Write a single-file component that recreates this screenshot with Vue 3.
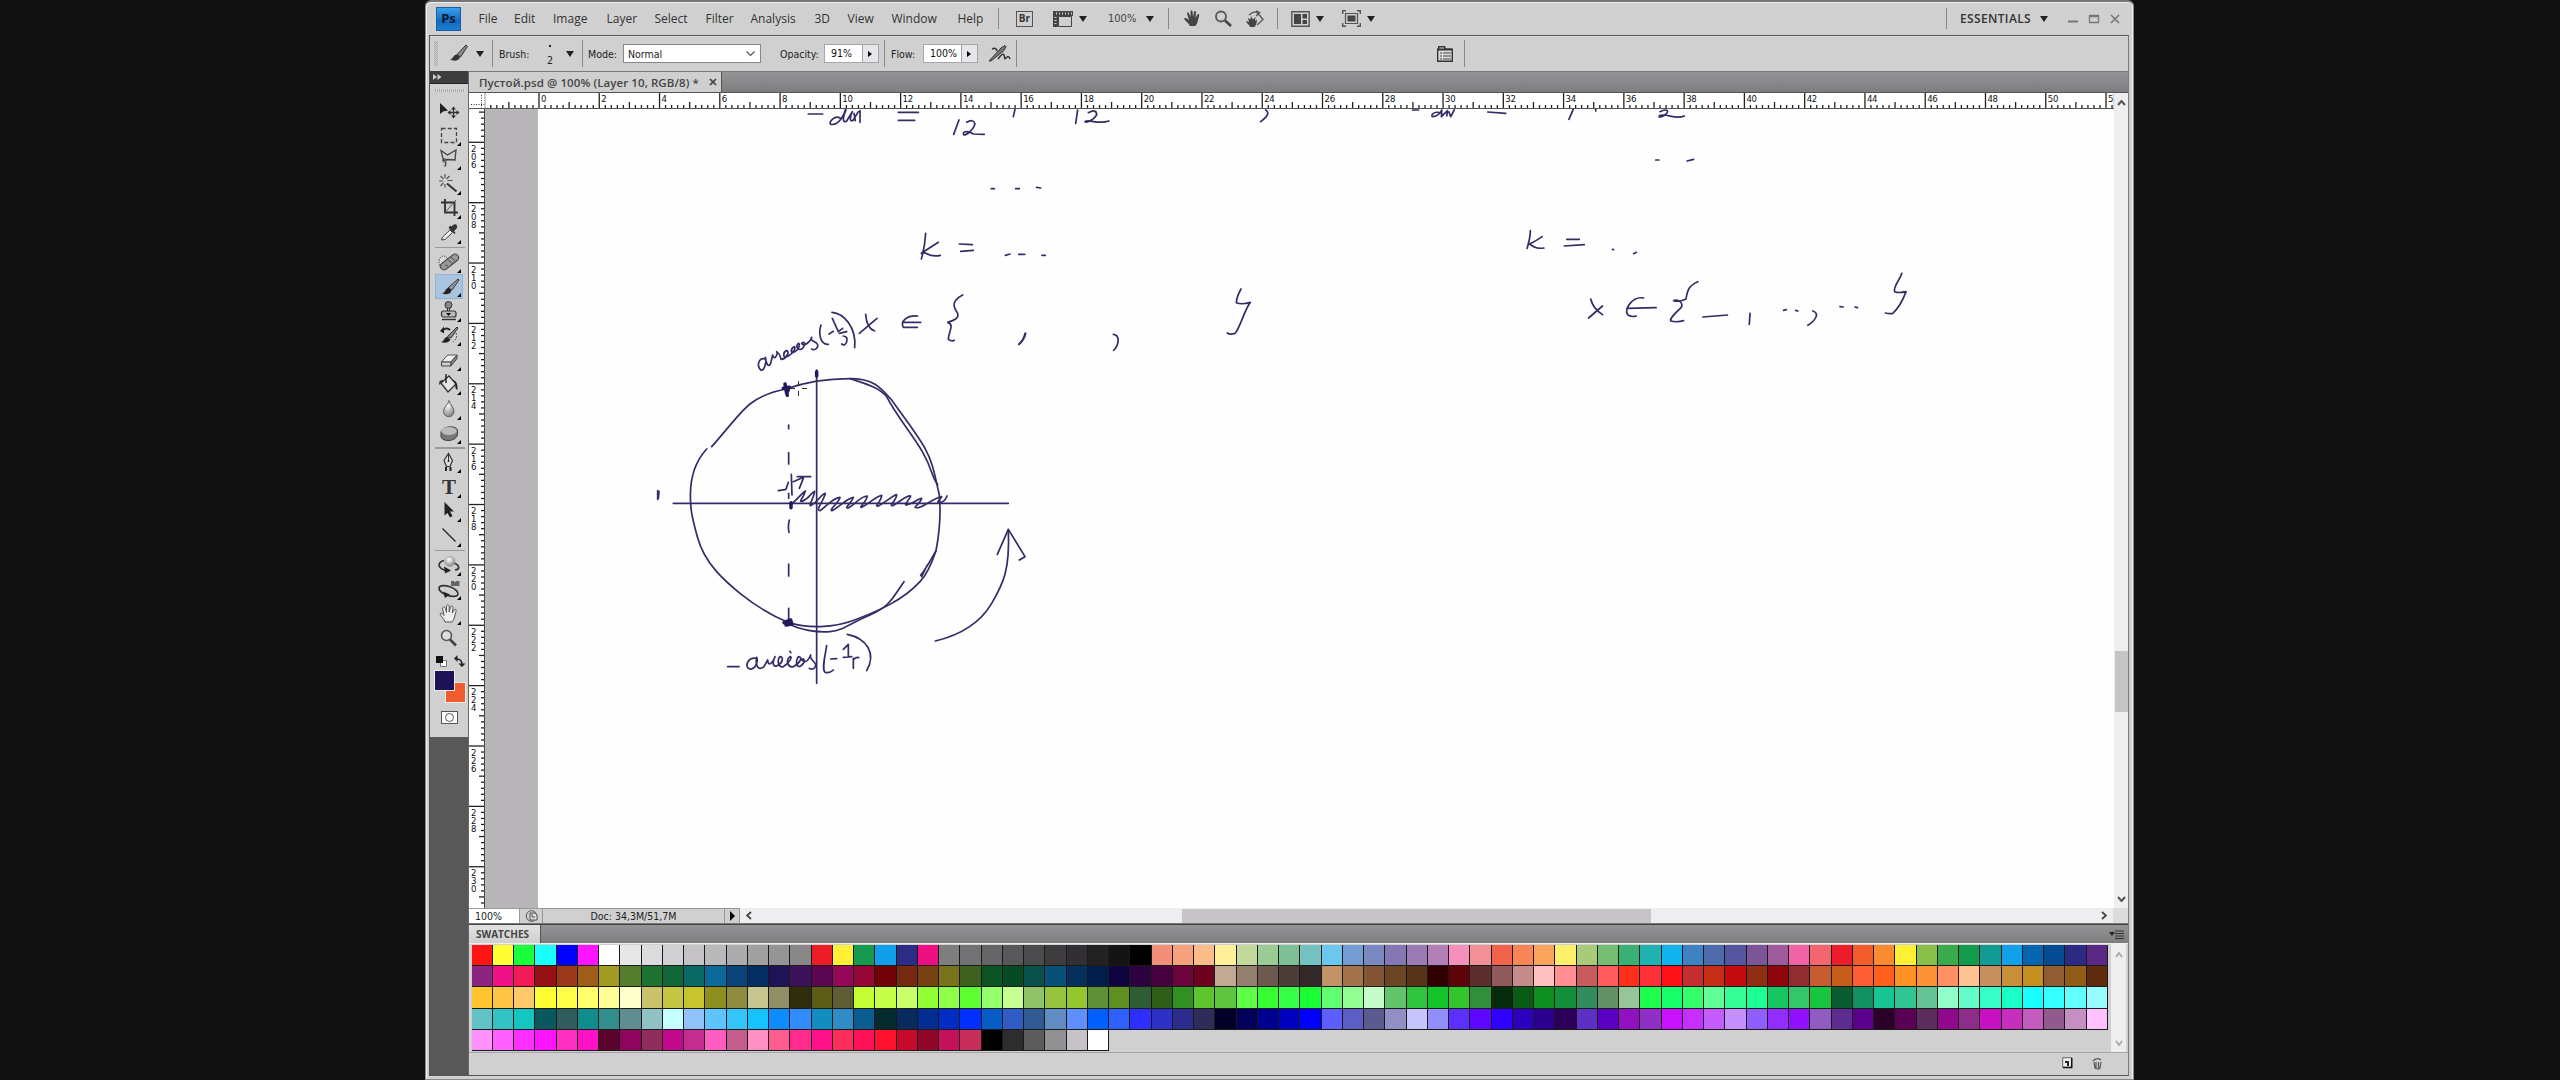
<script setup>
const menus = [
  ['File', 35.5], ['Edit', 39], ['Image', 53.5], ['Layer', 48], ['Select', 51], ['Filter', 45],
  ['Analysis', 64], ['3D', 33], ['View', 44], ['Window', 66], ['Help', 40],
]

const STEP = 6.027
const hTicks = []
for (let i = -8; i <= 261; i++) {
  // The last major mark only has room for its first digit.
  const label = String(i / 5)
  hTicks.push({ x: 70 + i * STEP, kind: i % 10 === 0 ? 'major' : i % 5 === 0 ? 'mid' : 'minor', label: i === 260 ? label[0] : label })
}
const hMajors = hTicks.filter((t) => t.kind === 'major')
const vTicks = []
for (let i = -5; i <= 126; i++) {
  vTicks.push({ y: 33.3 + i * 6.037, kind: i % 10 === 0 ? 'major' : i % 5 === 0 ? 'mid' : 'minor', label: String(206 + i / 5) })
}
const vMajors = vTicks.filter((t) => t.kind === 'major')

const swatchRows = [
  'ff1414 ffff33 1aff3c 1affff 0000ff ff14ff ffffff e8e7e8 dddbde d1d0d2 c5c3c6 b9b8ba adabae a0a0a0 949496 888686 ed1c29 fff035 159a50 109fe8 2c2b86 ee0f82 7e7e7e 727174 666466 585759 4b4a4c 3e3c3f 312f33 222222 141416 000000 f28f7a f7a27c fdbd88 fff099 c2d99b 9acb94 7fbf95 74c3c0 6bc7ee 749cd2 7a89bf 8378b4 9a7bb4 b27fb6 f58fbc f28f97 f2634c f88553 fca45b fff06b a7cb78 76bc73 3ab072 20b2b0 13b3f0 3f82c4 4b6bab 5555a0 7c5598 9e5b9b f062a4 f26571 ed1c2b f25d2b f88c2e fff033 89bf49 3aaa4b 119c4b 129b92 12a0ea 0565b0 044b91 2b2b82 5c2886',
  '8b2580 ee1188 f01b58 961116 9a3a1b 9f5d1a a39a22 557d2d 1f7331 0e6737 086a63 0a6a99 08437a 032e63 1f1258 3d1059 5b0651 950757 960636 700208 762b10 774211 79741c 3e611f 0a5323 074b25 07514a 06507a 06305c 021e4b 0f0340 2c0340 45023e 6c033a 6d0220 c1aa91 927f6e 6d594e 4c3d38 322829 c29367 a3734b 825535 6c4524 57331a 2e0000 5e0408 5d2c2d 905a5c c68c8c ffbfc3 ff8f91 c75c5c ff5c5c ff3019 ff3037 ff1217 c52e31 c62d16 c40c10 8f2d12 8f070c 8f2d30 c65b32 c65e1a ff5d36 ff5e1c ff9125 ff9237 ff9162 ffc392 c68f60 c68f38 c68f22 905c33 905c17 5e2c0c',
  'ffc42e ffc544 ffc86b ffff33 ffff49 ffff6b ffff98 ffffcb c8c36c c6c643 c6c530 8f8f20 8f8c3d c7c590 918f65 302d0c 5d5c17 5d5c32 c4ff33 c5ff4a c8ff6b 91ff33 91ff49 5eff33 95ff6b c7ff92 90c267 96c43d 94c62d 5d9037 5d901f 2e5d33 305d16 309020 5ec42c 5fc541 5eff47 36ff31 38ff48 1aff32 60ff72 92ff94 c6fcc9 62c56b 31c53f 14c529 32c52c 318f3b 052b0b 085c15 0e8f20 138e3b 338c60 639064 95c598 1fff4c 1aff6c 34ff6b 60ff98 36ff99 1dff95 17c562 34c66a 17c53f 085c30 119162 18c594 32c594 64c296 92ffca 62ffca 36ffc8 1cffc8 1affff 35ffff 62ffff 98fcff',
  '62c3c5 33c3c5 15c5c0 09585e 305c5c 118c8c 328e88 608e90 91c2c3 c5ffff 92c2fa 5ec5fc 33c5f8 14c3ff 0c8cff 308cff 128dbf 308cc5 0a5c90 052b2e 062b5c 032c90 002dc5 002fff 085cc5 305cc5 305a92 608cc2 5f8fff 0060ff 2e60ff 2e2fff 2e2fc5 2c2c8c 2f2c5a 020028 03005a 00008f 0000c0 0000ff 5d5eff 5d5ec5 5b5b90 918fc3 c7c4fc 928ffc 5b30ff 5d07ff 2d00ff 2d00c0 2c008e 2c005a 5c2fc5 5a00c2 9010c2 8f2fc5 c812ff c52fff c45cff c68fff 905eff 912eff 9010ff 905cc2 5c2c90 5a008d 2d0029 5a0055 5c2c5a 90088c 8e2c8a c610c2 c52fbc c45cc0 905a8f c68fc2 ffc2ff',
  'ff91fc ff60ff ff30ff ff14ff ff2fc2 ff12c5 5d022d 8f055d 8f2d5c c5088d c52c8f ff5dc2 c45c8c ff91c5 ff5c91 ff2c8c ff1188 ff2d5c ff1158 ff1230 c50a2c 8f0628 c5105a c72e5c 000000 2d2d2d 5c5c5c 919193 c5c3c6 ffffff',
].map((r) => r.split(' ').map((c) => '#' + c))

// Each tool glyph is drawn in a 28 x 24 box.
const tools = [
  { id: 'move', svg: '<path d="M5 5V16L8 13.5 13 12.500Z" fill="#222"/><path d="M18.500 9.500v10M13.500 14.500h10" stroke="#333" stroke-width="1.300"/><path d="M18.500 8.500l-2.500 3h5zM18.500 20.500l-2.500-3h5zM12.500 14.500l3-2.500v5zM24.500 14.500l-3-2.500v5z" fill="#333"/>' },
  { id: 'marquee', more: 1, svg: '<rect x="6.500" y="5.500" width="15" height="14" stroke="#444" stroke-width="1.300" stroke-dasharray="4 2.200"/>' },
  { id: 'lasso', more: 1, svg: '<path d="M6 3.500l6.500 4.500 8.500-5-1 10-7.500-.5-4 1z" stroke="#444" stroke-width="1.300"/><circle cx="9.500" cy="13.500" r="1.800" stroke="#444"/><path d="M10 15q2 1.500-.5 4.500" stroke="#444" stroke-width="1.300"/>' },
  { id: 'wand', more: 1, svg: '<path d="M12 11.500l9.500 8" stroke="#333" stroke-width="2"/><path d="M10 2v4M10 12v3.500M4 9h4M12.500 8.500h5M5.500 4l3 3M14.500 4l-3 3M5.500 14l3-3" stroke="#555" stroke-width="1.200"/>' },
  { id: 'crop', more: 1, svg: '<path d="M10 3v13.500h13M6 6.500h13.500V20" stroke="#333" stroke-width="1.900"/><path d="M10 16.500L21 4" stroke="#555" stroke-width="1"/>' },
  { id: 'eyedropper', more: 1, svg: '<path d="M6.500 19l1-3 7.500-7 2.500 2.500-7.500 7z" fill="#eee" stroke="#444" stroke-width="1"/><path d="M13.500 7l6 6 1-1-1.500-2q4-3 3-5.500-2-3-5.500 1l-1.500-1z" fill="#333"/>', sep: 1 },
  { id: 'heal', more: 1, svg: '<ellipse cx="8.500" cy="12" rx="4.500" ry="6" fill="#ddd" stroke="#222" stroke-dasharray="1.200 1.300"/><rect x="4" y="8.500" width="21" height="7" rx="3.500" transform="rotate(-38 14.500 12)" fill="#999" stroke="#444" stroke-width="1.100"/><path d="M10 15l3 1M12 9l6 5M16 7l4 4" stroke="#555"/>' },
  { id: 'brush', more: 1, active: 1, svg: '<path d="M13 14L23 5l1 1-7 10z" fill="#999" stroke="#333" stroke-width="1"/><path d="M7 19.500c4-1 3-5.500 6.500-5.500l3 2.500c-1 4-6 4.500-9.500 3z" fill="#222"/>' },
  { id: 'stamp', more: 1, svg: '<circle cx="13.500" cy="6" r="3.500" fill="#888" stroke="#333"/><path d="M12.500 9v4h2V9" stroke="#333"/><rect x="6.500" y="12" width="14.500" height="6" rx="2" fill="#bbb" stroke="#333" stroke-width="1.200"/><path d="M7 20.500h14" stroke="#333" stroke-width="1.400"/><path d="M11 14h5l-2.500 3z" fill="#111"/>' },
  { id: 'history', more: 1, svg: '<path d="M12.500 13.500L22 4l1 1-7 10z" fill="#888" stroke="#333"/><path d="M6 19c4-1 3-5.500 6.500-5l3 2.500C14 20 9 20.500 6 19z" fill="#222"/><path d="M8 7q4-3 7 0" stroke="#222" stroke-width="2"/><path d="M9 3.500v7L5 8z" fill="#222"/><path d="M21 10q2 5-3 9" stroke="#333" stroke-dasharray="1.500 1.500"/>' },
  { id: 'eraser', more: 1, svg: '<path d="M6.500 14l6-7h9.500l-6 7z" fill="#eee" stroke="#555"/><path d="M6.500 14H16v4H6.500z" fill="#ccc" stroke="#444"/><path d="M16 14l6-7v3.500L16 18z" fill="#888" stroke="#444"/>' },
  { id: 'bucket', more: 1, svg: '<path d="M6 11l8-7 7 8-8 8z" fill="#e6e6e6" stroke="#333" stroke-width="1.300"/><path d="M5 12.500q-1-4 3-3.500M11 2v9" stroke="#222" stroke-width="1.400"/><path d="M18 8q5 1 4.500 10-3-1-2-6z" fill="#222"/>' },
  { id: 'blur', more: 1, svg: '<path d="M14 3.500c1 5 5 6 5 11a5.200 5.200 0 0 1-10.500 0c0-5 4.500-6 5.500-11z" fill="url(#ball)" stroke="#666"/>' },
  { id: 'sponge', more: 1, svg: '<path d="M6 11c1-6 15-7 16.500-2v5c-2 7-15 7-16.500 2z" fill="#777" stroke="#444"/><ellipse cx="14" cy="10" rx="7.800" ry="4" fill="#bbb"/>', sep: 1 },
  { id: 'pen', more: 1, svg: '<path d="M13.500 3.500l4 7-2.500 6h-3.500l-2.500-6z" fill="#ddd" stroke="#333" stroke-width="1.200"/><path d="M13.500 4v7" stroke="#333"/><path d="M11 17v4M15.500 17v4" stroke="#222" stroke-width="2"/><circle cx="13.500" cy="11" r="1" fill="#222"/>' },
  { id: 'type', more: 1, svg: '<text x="14" y="18.500" text-anchor="middle" font-family="Liberation Serif, serif" font-size="21" font-weight="bold" fill="#333">T</text>' },
  { id: 'select', more: 1, svg: '<path d="M9.500 3v13.500l3-2.500 2.500 4.500 2.500-1.500-2.500-4.500h4z" fill="#222"/>' },
  { id: 'line', more: 1, svg: '<path d="M7.500 4.500L20.500 17.500" stroke="#333" stroke-width="1.500"/>', sep: 1 },
  { id: 'rotate3d', more: 1, svg: '<path d="M9 7.500C1 9.500 3 17 13 17.500M19 10c6 2.500 6 6.500 1 7" stroke="#333" stroke-width="1.700"/><path d="M9 13.500l7 4-6 3z" fill="#222"/><circle cx="15" cy="8.500" r="5" fill="url(#ball)" stroke="#999" stroke-width=".6"/>' },
  { id: 'orbit3d', more: 1, svg: '<ellipse cx="13.500" cy="14" rx="10" ry="4.500" transform="rotate(20 13.500 14)" stroke="#333" stroke-width="1.700"/><path d="M8 14.500l7 3-5 3.500z" fill="#222"/><path d="M16 4h3l1 1.500 1-1.500h3.500v5H16z" fill="#666"/>' },
  { id: 'hand', more: 1, svg: '<path d="M10 20c-1-4-4-5-5-8 1-2 3 0 4 1.500L7.500 6c1-2 2.500-1 3 .5l1 4V4c1-2 2.500-1 2.700.5V10l1.300-5c1-2 2.500-1 2.500 1l-.7 5 1.700-3c1-1.500 2.500-.5 2 1.500-1 3-1.500 8-4 10.500z" fill="#eee" stroke="#555"/>' },
  { id: 'zoom', svg: '<circle cx="11.500" cy="9.500" r="5" fill="#ddd" stroke="#555" stroke-width="1.500"/><path d="M15 13.500l6 6" stroke="#444" stroke-width="2.600"/>' },
]

// Brush strokes of the document, grouped by the tile they were laid down in.
const strokes = [
  {
    id: 'circle', t: 'translate(640 280) scale(.33333)',
    thin: [
      'M100 670H1105', 'M530 270V1210',
      'M215 500C260 450 300 395 330 372S400 334 438 327',
      'M438 327C500 305 560 296 630 296S720 320 755 360C790 410 830 460 855 505S885 590 898 645C903 700 900 750 888 812C875 850 860 885 840 905C790 960 720 990 650 1018S500 1045 447 1028C390 1005 340 972 300 940C260 908 245 892 230 875C195 835 180 800 172 770C155 710 152 690 152 670C147 600 165 545 200 507',
      'M630 296C690 315 720 325 740 350C770 410 820 465 850 520S870 580 893 615',
      'M442 1030C480 1050 530 1058 570 1055S630 1030 690 1005S760 950 792 905',
      'M888 812C870 845 855 870 842 886M862 855L845 890',
      'M886 1083C960 1065 1020 1030 1055 970S1110 870 1105 750', 'M1105 748L1072 823M1105 748L1155 830L1138 840',
      'M446 435V446M446 518V552M446 640V655M448 720Q443 740 447 757M446 852V888M446 985V1028',
      'M53 632V658M57 634L55 655', 'M415 632L435 629M445 607L438 628M454 583L456 645M460 605L490 592M472 590L512 590M490 595L478 625',
      'M455 672C480 650 490 635 496 633C490 655 475 665 486 664C510 655 515 635 524 634C520 660 505 675 512 677C535 665 545 640 556 640C550 665 525 690 540 692C560 680 575 655 600 652C600 665 565 690 576 692C600 680 620 655 640 652C635 670 610 685 625 684C650 670 660 650 682 648C680 665 655 683 665 682C690 670 705 650 725 646C725 665 700 680 715 678C740 665 755 648 770 644C770 660 745 678 758 677C780 665 800 645 812 648C805 665 790 675 800 675C820 670 835 655 845 655C840 675 810 685 835 683C860 675 880 655 905 650C900 660 885 668 900 668Q915 665 921 648',
      'M375 237C355 230 350 260 362 270C375 275 380 240 376 232C378 250 385 265 392 250L398 225C402 245 415 222 410 215C425 225 420 240 425 238C440 235 450 215 440 212C430 215 425 238 445 228C460 220 470 200 462 200C452 205 450 225 465 215C480 205 480 190 475 190C465 200 475 215 488 205C500 190 490 182 485 190C490 205 515 180 515 172C505 185 545 185 530 205Q520 212 515 207',
      'M543 135C535 160 540 195 565 193M567 162L580 154M577 115L595 155L608 145M598 160L620 155M610 168Q625 170 620 185T605 192M576 97C610 100 650 140 644 203',
      'M677 103Q680 145 704 153M711 115L658 160', 'M833 108C800 105 780 125 790 142H832M790 127H842',
      'M968 45C940 60 935 75 952 98C960 115 940 122 923 127C945 135 925 155 925 178Q935 185 943 181', 'M1155 160Q1152 178 1136 193',
      'M263 1160H297', 'M350 1135C325 1130 315 1155 325 1165C345 1175 355 1145 350 1132C345 1155 355 1175 372 1160L383 1140C385 1165 400 1145 405 1130C395 1150 400 1165 415 1155C430 1145 430 1130 420 1130C410 1140 415 1165 430 1160C445 1150 460 1130 450 1130C435 1140 445 1165 460 1160C480 1150 490 1130 475 1130C465 1145 470 1165 482 1158C500 1145 490 1130 485 1140C500 1155 510 1130 512 1125C505 1140 540 1150 522 1165Q515 1170 508 1165M450 1114L452 1118',
      'M560 1097C555 1130 545 1165 555 1177Q570 1180 580 1170M572 1137L590 1136M610 1108L625 1093V1130M610 1132L635 1130M640 1135V1165M640 1140Q648 1130 656 1133M622 1063C680 1075 710 1120 680 1172',
    ],
    thick: ['M430 325L448 322L440 340L435 312L442 346', 'M432 1028L452 1020L455 1032L438 1035', 'M453 668V683M530 275V288'],
  },
  {
    id: 'left', t: 'translate(780 90) scale(.33333)',
    thin: [
      'M85 72H128', 'M180 84C165 75 145 95 152 103C175 108 195 75 198 50M198 60C185 90 190 100 200 93L217 65C208 85 210 98 220 90L235 65M222 70L226 92M240 62V97', 'M355 67H415M355 91H404',
      'M537 90L521 133', 'M560 97Q580 85 585 102C580 120 560 135 552 135C545 125 560 120 580 132T613 133', 'M705 58L700 80', 'M893 60L887 100',
      'M925 68Q950 55 950 75C940 90 920 100 915 95C925 85 950 105 987 93', 'M1457 60Q1475 70 1442 95',
      'M634 296H643M707 296H718M770 292L782 294', 'M437 430Q435 470 424 507M475 457L424 490C440 480 440 505 481 496', 'M538 462L577 464M542 484L580 481', 'M676 496L690 492M716 493H734M786 496H796',
      'M737 730Q733 750 717 763M1000 733C1020 735 1018 765 1001 781', 'M1383 597Q1370 620 1369 638Q1385 645 1411 637C1395 655 1380 715 1365 730Q1350 735 1342 729',
    ],
    thick: [],
  },
  {
    id: 'right', t: 'translate(1400 90) scale(.35714 .33333)',
    thin: [
      'M35 60H52', 'M108 67C92 65 85 78 92 80C108 78 115 65 117 60M117 62L116 80L133 62L131 78M137 66L142 80L152 60', 'M246 66L296 70', 'M485 58L473 88M548 58V63', 'M728 65C745 55 755 62 745 72C730 85 720 82 728 76C750 70 770 90 796 78',
      'M716 210H725M804 213L822 208', 'M365 422C365 445 358 465 356 475M398 440Q370 460 362 462C375 470 380 477 403 474', 'M467 448H502M460 468L516 464', 'M595 478L598 479M654 491L662 487',
      'M534 627Q540 655 567 674M567 648L528 684', 'M682 624C650 618 625 660 638 675Q650 682 661 678M635 655L717 653',
      'M834 575C800 590 805 615 800 628Q780 637 766 632C785 625 795 645 785 655C770 670 755 685 758 693Q775 698 794 692', 'M848 681L917 675M980 670L978 703M1074 661L1082 659M1108 661L1114 663M1156 663C1175 670 1165 690 1142 706M1232 650L1241 651M1274 651L1281 653',
      'M1405 550C1400 570 1380 590 1385 605Q1395 610 1417 605C1410 625 1395 655 1380 670Q1370 672 1359 669',
    ],
    thick: [],
  },
]
</script>

<template>
  <div class="desktop">
    <svg class="defs" width="0" height="0">
      <defs>
        <radialGradient id="ball" cx=".4" cy=".3" r=".8"><stop offset="0" stop-color="#fff" /><stop offset="1" stop-color="#777" /></radialGradient>
      </defs>
    </svg>
    <div class="window">
      <header class="titlebar">
        <div class="logo">Ps</div>
        <nav class="menu"><span v-for="m in menus" :key="m[0]" :style="{ width: m[1] + 'px' }">{{ m[0] }}</span></nav>
        <div class="appbar">
          <i class="rule"></i>
          <b class="bridge">Br</b>
          <svg width="20" height="16" fill="none"><path d="M0 0h20v5H5v11H0z" fill="#444" /><path d="M3 2.500h16" stroke="#ccc" stroke-width="2" stroke-dasharray="1 2" /><path d="M2.500 6v9" stroke="#ccc" stroke-width="2" stroke-dasharray="1 2" /><path d="M5.500 5.500h13v10h-13z" stroke="#444" /></svg>
          <i class="tri"></i>
          <span class="zoomval">100%</span>
          <i class="tri"></i>
          <i class="rule"></i>
          <svg width="17" height="17"><path d="M6 16C4 12 1 11 0 8.500 2 7 3.500 9 5 10L3 3.500c0-1.500 1.700-1.500 2 0L6.500 7V1.500C6.500 0 8.300 0 8.500 1.500L9 7l1-5c.5-1.500 2-1 2 .5L11.500 8l2-3.500c1-1 2.200 0 1.500 1.500-1 3-1 7-3.500 10z" fill="#444" /></svg>
          <svg width="17" height="17" fill="none"><circle cx="6" cy="6.500" r="5" stroke="#555" stroke-width="1.800" /><path d="M10 10.500l6 5.500" stroke="#444" stroke-width="2.600" /></svg>
          <svg width="18" height="18" fill="none"><path d="M4 17C3 14 0 13 0 11l3 1-1-4 2.500 1.500L5 6l2 3.500L9.500 7 9 11l2-1.500c0 3-1 6-2.500 7.500z" fill="#444" /><path d="M10 6l2.500-2L17 9.500 11 15M3 5q4-4 9-3" stroke="#555" stroke-width="1.300" /><path d="M10 0l5 2.500-4 2.500z" fill="#555" /></svg>
          <i class="rule"></i>
          <svg width="19" height="16" fill="none"><path d="M.8.800h17.400v14.400H.8z" stroke="#555" stroke-width="1.400" /><path d="M3 3h7v10H3zM11.500 3H16v4.500h-4.500zM11.500 9H16v4h-4.500z" fill="#444" /></svg>
          <i class="tri"></i>
          <svg width="19" height="17" fill="none"><path d="M.7 4V.7H4M15 .700h3.300V4M.7 13v3.300H4M15 16.300h3.300V13" stroke="#555" stroke-width="1.400" /><path d="M3.500 3.500h12v10h-12z" stroke="#555" stroke-width="1.200" /><path d="M5.500 5.500h8v6h-8z" fill="#444" /></svg>
          <i class="tri"></i>
        </div>
        <div class="workspace-switch">
          <i class="rule"></i><span>ESSENTIALS</span><i class="tri"></i>
          <svg width="54" height="12" fill="none" stroke="#777"><path d="M0 8.500h10" stroke-width="2" /><path d="M21.500 2.500h9v7h-9zM21.500 3.500h9" stroke-width="1.300" /><path d="M43 2l8 8M51 2l-8 8" stroke-width="1.700" /></svg>
        </div>
      </header>

      <div class="frame">
        <div class="options">
          <i class="grip"></i>
          <svg width="18" height="17"><path d="M7 9.500L16 0l1.500 1.500L10.500 12z" fill="#888" stroke="#333" stroke-width="1" /><path d="M0 14.500c4-1 3-5 7-5l3 2.500c-1 4-6 4.500-10 2.500z" fill="#333" /></svg>
          <i class="tri"></i>
          <i class="rule"></i>
          <span>Brush:</span>
          <span class="tip"><em></em>2</span>
          <i class="tri"></i>
          <i class="rule"></i>
          <span>Mode:</span>
          <span class="select">Normal<svg width="9" height="6" fill="none"><path d="M.5.500l4 4 4-4" stroke="#555" stroke-width="1.200" /></svg></span>
          <span>Opacity:</span>
          <span class="field"><b>91%</b><u><i></i></u></span>
          <i class="rule"></i>
          <span>Flow:</span>
          <span class="field"><b>100%</b><u><i></i></u></span>
          <svg width="23" height="18" fill="none"><path d="M1 16L13 3l4-2.500 1 1-2 4L3 16z" fill="#777" stroke="#333" /><path d="M4 4q4-2 5 2M10 14c3-4 5-6 6-4s0 5 2 3 3-2 4 1" stroke="#333" stroke-width="1.500" /></svg>
          <i class="rule"></i>
          <svg width="16" height="16" fill="none"><path d="M.7 15.300V3.200h1V.7h6v2.500h7.600v12.100z" fill="#ddd" stroke="#333" stroke-width="1.400" /><path d="M1 3.500h14" stroke="#333" stroke-width="2" /><path d="M3 7h2M6 7h8M3 10h2M6 10h8M3 13h2M6 13h8" stroke="#444" stroke-width="1.200" /></svg>
          <i class="rule"></i>
        </div>

        <div class="main">
          <aside class="side">
            <div class="collapse"><svg width="9" height="6"><path d="M0 0l4 3-4 3zM4.500 0l4 3-4 3z" fill="#ccc" /></svg></div>
            <div class="toolbox">
              <i class="hgrip"></i>
              <template v-for="t in tools" :key="t.id">
                <div class="tool" :class="{ active: t.active }">
                  <svg width="28" height="24" fill="none"><g v-html="t.svg"></g><path v-if="t.more" d="M26 19v4h-4z" fill="#000" /></svg>
                </div>
                <hr v-if="t.sep" />
              </template>
              <svg class="mini" width="32" height="14" fill="none"><path d="M5.500 5.500h6v6h-6z" fill="#fff" stroke="#777" /><path d="M1 1h7v7H1z" fill="#111" /><path d="M22 4q5 0 5 6" stroke="#222" stroke-width="1.500" /><path d="M22.500 0v7L19 3.500zM23.500 8.500h7L27 12z" fill="#222" /></svg>
              <div class="colors"><i class="back"></i><i class="fore"></i></div>
              <div class="mask"><i></i></div>
            </div>
          </aside>

          <section class="doc">
            <div class="tabs"><div class="tab">Пустой.psd @ 100% (Layer 10, RGB/8) *<svg width="8" height="8"><path d="M1 1l6 6M7 1L1 7" stroke="#444" stroke-width="1.700" /></svg></div></div>
            <div class="editor">
              <div class="sheet">
                <svg class="hruler" width="1645" height="16">
                  <rect width="1644" height="15" fill="#fff" />
                  <path d="M12.500 2v14M2 11.500h14" stroke="#333" stroke-dasharray="1 1.500" />
                  <path d="M16 0v16" stroke="#999" />
                  <path v-for="t in hTicks" :key="t.x" :d="`M${t.x} ${t.kind === 'major' ? 0 : t.kind === 'mid' ? 9 : 12}V15.500`" stroke="#222" stroke-width="1.300" />
                  <text v-for="t in hMajors" :key="t.label + t.x" :x="t.x + 2" y="9">{{ t.label }}</text>
                  <path d="M0 15.500h1645" stroke="#555" />
                </svg>
                <div class="page">
                  <svg class="vruler" width="16" height="799">
                    <rect width="16" height="799" fill="#fff" />
                    <g v-for="t in vTicks" :key="t.y">
                      <path :d="`M${t.kind === 'major' ? 0 : t.kind === 'mid' ? 10 : 12} ${t.y}H16`" stroke="#222" stroke-width="1.300" />
                    </g>
                    <g v-for="t in vMajors" :key="t.label">
                      <text v-for="(d, n) in t.label" :key="n" x="4.500" text-anchor="middle" :y="t.y + 9.500 + n * 8">{{ d }}</text>
                    </g>
                    <path d="M15.500 0v799" stroke="#444" />
                  </svg>
                  <svg class="canvas" width="1629" height="799" viewBox="485 109 1629 799" fill="none">
                    <rect x="485" y="109" width="1629" height="799" fill="#fefefe" />
                    <rect x="485" y="109" width="53" height="799" fill="#b8b6b9" />
                    <g v-for="g in strokes" :key="g.id" :transform="g.t" stroke="#352c66" stroke-linecap="round" stroke-linejoin="round">
                      <path v-for="d in g.thin" :key="d" :d="d" stroke-width="1.700" vector-effect="non-scaling-stroke" />
                      <path v-for="d in g.thick" :key="d" :d="d" stroke-width="3.500" stroke="#211a5c" vector-effect="non-scaling-stroke" />
                    </g>
                    <path d="M798.500 381v5M798.500 391v5M790 388.500h5M802 388.500h5" stroke="#333" />
                  </svg>
                </div>
              </div>
              <div class="vscroll">
                <svg width="9" height="6" fill="none"><path d="M1 5l3.500-4L8 5" stroke="#555" stroke-width="2" /></svg>
                <i></i>
                <svg width="9" height="6" fill="none"><path d="M1 1l3.500 4L8 1" stroke="#555" stroke-width="2" /></svg>
              </div>
            </div>
            <div class="status">
              <span class="pct">100%</span>
              <span class="clock"><svg width="14" height="14" fill="none"><circle cx="6.500" cy="7" r="5.300" stroke="#555" /><path d="M5 4h5l2 2v5H5z" fill="#ddd" stroke="#555" /><path d="M7 5v3h3" stroke="#555" /></svg></span>
              <span class="size">Doc: 34,3M/51,7M</span>
              <span class="go"><i></i></span>
              <div class="hscroll">
                <svg width="6" height="9" fill="none"><path d="M5 1L1 4.500 5 8" stroke="#444" stroke-width="1.800" /></svg>
                <i></i>
                <svg width="6" height="9" fill="none"><path d="M1 1l4 3.500L1 8" stroke="#444" stroke-width="1.800" /></svg>
              </div>
              <em class="corner"></em>
            </div>

            <div class="panel">
              <div class="panel-head"><div class="panel-tab">SWATCHES</div><svg width="15" height="9"><path d="M0 2h6L3 6z" fill="#222" /><path d="M6 1h9M6 3.500h9M6 6h9M6 8.500h9" stroke="#333" /></svg></div>
              <div class="panel-body">
                <div class="grid">
                  <div v-for="(r, i) in swatchRows" :key="i" class="row"><i v-for="(c, j) in r" :key="j" :style="{ background: c }"></i></div>
                </div>
                <div class="pscroll">
                  <svg width="8" height="7" fill="none"><path d="M1 6l3-4 3 4" stroke="#aaa" stroke-width="1.800" /></svg>
                  <svg width="8" height="7" fill="none"><path d="M1 1l3 4 3-4" stroke="#aaa" stroke-width="1.800" /></svg>
                </div>
              </div>
              <div class="panel-foot">
                <svg width="11" height="12" fill="none"><path d="M.7.700h9v9.600h-9z" fill="#eee" stroke="#666" /><path d="M9.700 1v9.500H1" stroke="#111" stroke-width="1.500" /><path d="M3 4h4v5H5V6H3z" fill="#222" /></svg>
                <svg width="11" height="13" fill="none"><path d="M1 4q4-4 8-1M2 5l1 6q3 2 5 0l1-6M4 5v6M6.500 5v6" stroke="#555" stroke-width="1.200" /></svg>
              </div>
            </div>
          </section>
        </div>
      </div>
    </div>
  </div>
</template>

<style>
body { margin: 0; background: #111; }
</style>

<style scoped>
* { box-sizing: border-box; }
.desktop { width: 2560px; height: 1080px; background: #111; overflow: hidden; display: flex; font-family: "DejaVu Sans Condensed", "DejaVu Sans", sans-serif; font-size: 10.5px; color: #222; }
.defs { position: absolute; }
svg { display: block; flex: none; }
i, em, u { font-style: normal; text-decoration: none; display: block; }
.window { margin-left: 425px; width: 1709px; height: 1080px; background: #d0d0d0; border: 1px solid #8a8a8c; border-top: 2px solid #77747a; border-radius: 6px 6px 0 0; display: flex; flex-direction: column; box-shadow: inset 1px 1px 0 #eee, inset -1px 0 0 #eee; }
.titlebar { height: 33px; flex: none; display: flex; align-items: center; padding-left: 10px; font-family: "Open Sans", "Noto Sans", sans-serif; font-size: 12px; color: #333; position: relative; }
.logo { width: 25px; height: 24px; margin-right: 17.5px; background: linear-gradient(#39a0f0, #1268bd 60%, #1d7fd6); border: 1px solid #1a5c9e; color: #0a1b33; font-weight: 700; font-size: 13px; line-height: 20px; text-align: center; }
.menu { display: flex; width: 519.5px; }
.menu span { white-space: nowrap; }
.rule { width: 1px; height: 21px; background: #888; }
.tri { width: 0; height: 0; border: 4px solid transparent; border-top: 6px solid #222; border-bottom: 0; }
.appbar { display: grid; grid-template-columns: 18px 37px 26px 29px 38px 22px 16px 31px 31px 31px 14px 25px 26px 25px 8px; align-items: center; }
.bridge { width: 17px; height: 16px; border: 1.5px solid #555; font-size: 10px; line-height: 12px; text-align: center; color: #333; }
.zoomval { font-family: "DejaVu Sans Condensed", sans-serif; font-size: 11px; color: #444; }
.workspace-switch { margin-left: auto; width: 187px; display: grid; grid-template-columns: 14px 80px 28px 54px; align-items: center; font-weight: 600; font-size: 12px; letter-spacing: .35px; }
.frame { margin: 0 4px 0 3px; height: 1041px; border: 1px solid #555; border-right-color: #777; display: flex; flex-direction: column; }
.options { height: 35px; flex: none; display: grid; grid-template-columns: 16px 26px 16px 7px 49px 18px 16px 6px 35px 157px 44px 60px 7px 32px 65px 28px 421px 27px 2px; align-items: center; padding-left: 4px; box-shadow: inset 0 1px 0 #ddd; }
.options .rule { height: 27px; }
.options > span { white-space: nowrap; }
.grip { width: 4px; height: 25px; background: repeating-conic-gradient(#aaa 0 25%, #d0d0d0 0 50%) 0 0 / 2px 2px; }
.tip { display: flex; flex-direction: column; align-items: center; width: 8px; margin-left: -2px; padding-top: 4px; }
.tip em { width: 1.500px; height: 1.500px; background: #222; margin-bottom: 7px; }
.select { width: 138px; height: 19px; background: #fff; border: 1px solid #888; padding: 0 5px 0 4px; display: flex; align-items: center; justify-content: space-between; }
.field { display: flex; width: 55px; height: 19px; background: #fff; border: 1.500px solid #a5a5ad; }
.field b { width: 37px; font-weight: 400; line-height: 17px; padding-left: 6px; color: #111; }
.field u { flex: 1; background: #e6e5e8; border-left: 1px solid #a5a5ad; display: flex; align-items: center; padding-left: 5px; }
.field u i, .go i { border: 3px solid transparent; border-left: 4.500px solid #000; border-right: 0; }
.main { display: flex; flex: 1; min-height: 0; }
.side { width: 39px; background: #585858; border-right: 1px solid #666; }
.collapse { height: 13px; background: #3d3d3d; border-bottom: 1px solid #222; padding: 3px 0 0 3px; }
.toolbox { height: 653px; background: #d0d0d0; display: flex; flex-direction: column; padding: 5px 0 0 5px; }
.hgrip { width: 30px; height: 3px; margin-bottom: 6px; flex: none; background: repeating-linear-gradient(90deg, #aaa 0 1px, #d8d8d8 1px 2px); }
.tool { height: 24.500px; width: 28px; flex: none; }
.tool.active { background: #a9c4df; box-shadow: inset 0 0 0 1px #8fb3d6; }
hr { width: 30px; height: 1.500px; margin: 1.500px 0; border: 0; background: #999; flex: none; }
.mini { margin: 4px 0 0 0; }
.colors { height: 33px; width: 32px; position: relative; margin: 1px 0 0 -1px; flex: none; }
.colors i { position: absolute; width: 21px; height: 21px; border: 1px solid #eee; }
.back { right: 0; bottom: 0; background: #f05c2c; }
.fore { left: 0; top: 0; background: #1c1258; }
.mask { width: 17px; height: 13px; margin: 8px 0 0 6px; border: 1px solid #555; background: #fff; display: flex; align-items: center; justify-content: center; }
.mask i { width: 9px; height: 9px; border: 1.300px solid #555; border-radius: 50%; }
.doc { flex: 1; min-width: 0; display: flex; flex-direction: column; }
.tabs { height: 22px; flex: none; background: linear-gradient(#949496, #7e7c7f); border-top: 1px solid #777; border-bottom: 1px solid #555; display: flex; }
.tab { width: 253px; background: #cfcfcf; border-right: 1px solid #555; display: flex; align-items: center; padding-left: 10px; font-family: "Open Sans", "Noto Sans", sans-serif; font-weight: 600; font-size: 11.500px; color: #444; white-space: nowrap; letter-spacing: .08px; }
.tab svg { margin-left: 10px; }
.editor { display: flex; height: 815px; flex: none; }
.sheet { width: 1645px; }
.hruler text, .vruler text { font-family: "DejaVu Sans Condensed", sans-serif; font-size: 9.500px; fill: #111; letter-spacing: -.3px; }
.page { display: flex; }
.vscroll { width: 14px; background: #eeedef; display: flex; flex-direction: column; align-items: center; padding: 7px 0 6px; }
.vscroll i { width: 13px; height: 61px; background: #c6c4c6; margin: 545px 0 auto; }
.status { display: flex; height: 16px; flex: none; background: #d0d0d0; line-height: 16px; border-bottom: 1px solid #777; }
.status > span { border: 1px solid #999; border-width: 1px 1px 0 0; line-height: 15px; }
.pct { width: 51px; background: #fff; padding-left: 6px; }
.clock { width: 23px; padding-left: 5px; }
.size { width: 182px; text-align: center; }
.go { width: 15px; display: flex; align-items: center; padding-left: 5px; }
.status .go i { border-width: 5px 0 5px 5px; }
.hscroll { flex: 1; background: #eeedef; display: flex; align-items: center; padding: 0 6px 0 6px; }
.hscroll i { width: 469px; height: 14px; background: #c6c4c6; margin: 0 auto 0 430px; }
.corner { width: 15px; background: #dcdcdc; }
.panel { flex: 1; display: flex; flex-direction: column; border-top: 1px solid #444; }
.panel-head { height: 19px; flex: none; background: linear-gradient(#949496, #7e7c7f); display: flex; justify-content: space-between; align-items: center; padding-right: 4px; border-bottom: 1px solid #eee; }
.panel-tab { width: 72px; height: 18px; padding-left: 7px; background: linear-gradient(#e2e2e2, #cfcfcf); border-right: 1px solid #555; font-family: "Open Sans", sans-serif; font-weight: 700; font-size: 10px; line-height: 18px; color: #444; }
.panel-body { display: flex; height: 109px; flex: none; border-bottom: 1.500px solid #a5a5a5; justify-content: space-between; padding-right: 2px; }
.grid { padding: 1px 0 0 2.500px; }
.row { display: flex; height: 21.200px; }
.row i { width: 21.260px; flex: none; border: solid #1a1a1a; border-width: 0 1.200px 1.200px 0; }
.pscroll { width: 15px; background: #eeedef; display: flex; flex-direction: column; justify-content: space-between; align-items: center; padding: 7px 0 5px; }
.panel-foot { display: flex; justify-content: flex-end; gap: 19px; padding: 4px 25px 0 0; }
</style>
